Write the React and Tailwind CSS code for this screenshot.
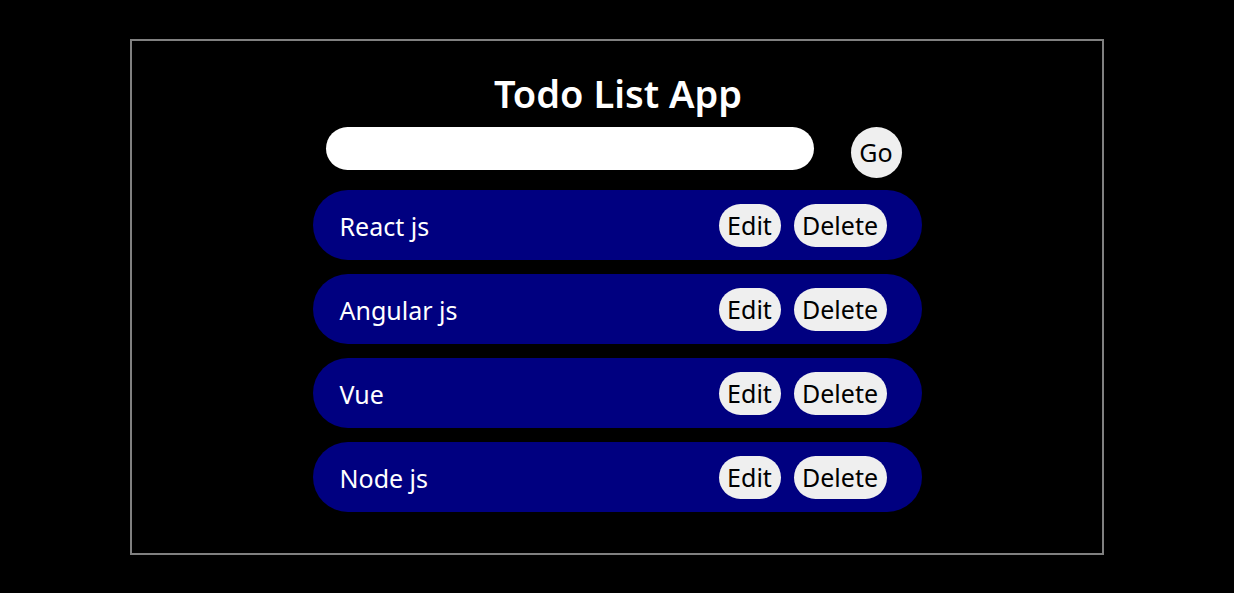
import { useState } from "react";

const initialTodos = ["React js", "Angular js", "Vue", "Node js"];

const TodoItem = ({ text }) => {
  return (
    <div className="flex h-[70px] w-full items-center justify-between rounded-full bg-[#000080] pl-[27px] pr-[35px]">
      <span className="pt-[2px] text-[25px] leading-none text-white">{text}</span>
      <div className="flex items-center gap-[13px]">
        <button className="flex h-[43px] w-[62px] items-center justify-center rounded-full bg-[#efefef] text-[25px] leading-none text-black">
          Edit
        </button>
        <button className="flex h-[43px] w-[93px] items-center justify-center rounded-full bg-[#efefef] text-[25px] leading-none text-black">
          Delete
        </button>
      </div>
    </div>
  );
};

export default function App() {
  const [todos] = useState(initialTodos);
  const [value, setValue] = useState("");

  return (
    <div
      className="min-h-[593px] w-full bg-black pt-[39px]"
      style={{ fontFamily: '"Noto Sans", "Open Sans", sans-serif' }}
    >
      <div className="mx-auto flex w-[974px] flex-col items-center border-2 border-[#808080] pt-[31px] pb-[41px]">
        <h1 className="h-[43px] pl-[2px] text-[38px] font-semibold leading-[43px] text-white">
          Todo List App
        </h1>
        <div className="mt-[12px] flex w-[609px] items-start pl-[13px]">
          <input
            className="h-[43px] w-[488px] rounded-full bg-white px-5 text-[20px] text-black outline-none"
            value={value}
            onChange={(e) => setValue(e.target.value)}
          />
          <button className="ml-[37px] flex h-[51px] w-[51px] items-center justify-center rounded-full bg-[#efefef] text-[25px] leading-none text-black">
            Go
          </button>
        </div>
        <div className="mt-[12px] flex w-[609px] flex-col gap-[14px]">
          {todos.map((t) => (
            <TodoItem key={t} text={t} />
          ))}
        </div>
      </div>
    </div>
  );
}
